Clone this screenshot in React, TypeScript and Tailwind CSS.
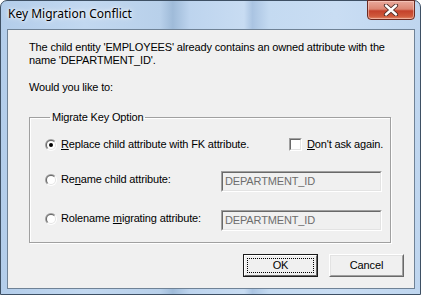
import React from 'react';

function Radio({ id, checked }: { id: string; checked?: boolean }) {
    return (
        <svg width="12" height="12" viewBox="0 0 12 12" className="shrink-0">
            <defs>
                <linearGradient id={`${id}-o`} x1="0" y1="0" x2="1" y2="1">
                    <stop offset="0.45" stopColor="#a0a0a0" />
                    <stop offset="0.55" stopColor="#ffffff" />
                </linearGradient>
                <linearGradient id={`${id}-i`} x1="0" y1="0" x2="1" y2="1">
                    <stop offset="0.45" stopColor="#696969" />
                    <stop offset="0.55" stopColor="#e3e3e3" />
                </linearGradient>
            </defs>
            <circle cx="6" cy="6" r="6" fill={`url(#${id}-o)`} />
            <circle cx="6" cy="6" r="5" fill={`url(#${id}-i)`} />
            <circle cx="6" cy="6" r="4" fill="#ffffff" />
            {checked && <circle cx="6" cy="6" r="2" fill="#000000" />}
        </svg>
    );
}

function TextBox({ value }: { value: string }) {
    return (
        <div className="w-[161px] h-[21px] border border-t-[#a0a0a0] border-l-[#a0a0a0] border-r-white border-b-white">
            <div className="h-full border border-t-[#696969] border-l-[#696969] border-r-[#e3e3e3] border-b-[#e3e3e3] bg-[#f0f0f0] pl-[2px] leading-[17px] text-[#6d6d6d]">
                {value}
            </div>
        </div>
    );
}

export default function App() {
    return (
        <div className="w-[421px] h-[295px] bg-white">
            <div className="w-full h-full flex flex-col rounded-t-[7px] border border-[#3e5064] bg-[linear-gradient(to_right,#b3cdea_0%,#c2d8f0_20%,#b8d0ea_38%,#9fbbd9_41%,#bdd4ee_45%,#c8dcf2_58%,#aac4e2_60%,#c4daf1_64%,#c9ddf3_80%,#bfd6ef_100%)] font-[family-name:'Liberation_Sans',Arial,sans-serif] text-[11px] leading-[13px] tracking-[-0.15px] text-black">
                {/* title bar */}
                <div className="h-[28px] flex items-start shrink-0">
                    <div className="ml-[7px] mt-[5px] font-[family-name:'Noto_Sans',sans-serif] text-[12px] leading-[16px] tracking-normal [text-shadow:0_0_6px_#ffffff,0_0_3px_#ffffff]">
                        Key Migration Conflict
                    </div>
                    <div className="ml-auto mr-[5px] -mt-px w-[48px] h-[20px] rounded-b-[4px] border border-[#6b2b22] bg-[linear-gradient(to_bottom,#e9a99c_0%,#dc8673_45%,#c4412b_55%,#cf5a3c_85%,#e38a6c_100%)] flex items-center justify-center shadow-[inset_0_0_0_1px_rgba(255,220,210,0.5)]">
                        <svg width="16" height="12" viewBox="0 0 16 12">
                            <path d="M3 1.5 L13 10.5 M13 1.5 L3 10.5" stroke="#4a2a26" strokeWidth="4.2" strokeLinecap="round" />
                            <path d="M3 1.5 L13 10.5 M13 1.5 L3 10.5" stroke="#ffffff" strokeWidth="2.4" strokeLinecap="round" />
                        </svg>
                    </div>
                </div>

                {/* client area */}
                <div className="ml-[6px] mr-[5px] mb-[5px] flex-1 border border-[#6f8296] bg-[#f0f0f0] flex flex-col pt-[11px] pl-[21px] pr-[10px] pb-[11px]">
                    <p>
                        The child entity 'EMPLOYEES' already contains an owned attribute with the
                        <br />
                        name 'DEPARTMENT_ID'.
                    </p>
                    <p className="mt-[14px]">Would you like to:</p>

                    <fieldset className="mt-[17px] w-[362px] border border-[#a0a0a0] shadow-[1px_1px_0_#ffffff,inset_1px_1px_0_#ffffff] pl-[15px] pt-[14px] pb-[11px]">
                        <legend className="ml-[5px] px-[2px]">Migrate Key Option</legend>

                        <div className="flex items-center h-[13px]">
                            <div className="w-[244px] flex items-center gap-[4px]">
                                <Radio id="r1" checked />
                                <span>
                                    <u className="underline-offset-[1px]">R</u>eplace child attribute with FK attribute.
                                </span>
                            </div>
                            <div className="flex items-center gap-[5px]">
                                <div className="w-[13px] h-[13px] border border-t-[#a0a0a0] border-l-[#a0a0a0] border-r-white border-b-white">
                                    <div className="h-full border border-t-[#696969] border-l-[#696969] border-r-[#e3e3e3] border-b-[#e3e3e3] bg-white" />
                                </div>
                                <span>
                                    <u className="underline-offset-[1px]">D</u>on't ask again.
                                </span>
                            </div>
                        </div>

                        <div className="flex items-start mt-[20px]">
                            <div className="w-[176px] flex items-center gap-[4px] pt-[2px]">
                                <Radio id="r2" />
                                <span>
                                    Re<u className="underline-offset-[1px]">n</u>ame child attribute:
                                </span>
                            </div>
                            <TextBox value="DEPARTMENT_ID" />
                        </div>

                        <div className="flex items-start mt-[18px]">
                            <div className="w-[176px] flex items-center gap-[4px] pt-[2px]">
                                <Radio id="r3" />
                                <span>
                                    Rolename <u className="underline-offset-[1px]">m</u>igrating attribute:
                                </span>
                            </div>
                            <TextBox value="DEPARTMENT_ID" />
                        </div>
                    </fieldset>

                    <div className="mt-auto flex justify-end gap-[11px]">
                        <button className="w-[75px] h-[23px] border border-[#1a1a1a] bg-[#f0f0f0] p-0">
                            <div className="h-full border border-t-white border-l-white border-r-[#696969] border-b-[#696969] p-[2px]">
                                <div className="h-full border border-dotted border-black flex items-center justify-center leading-[13px]">
                                    OK
                                </div>
                            </div>
                        </button>
                        <button className="w-[75px] h-[23px] border border-t-white border-l-white border-r-[#696969] border-b-[#696969] bg-[#f0f0f0] p-0">
                            <div className="h-full border border-t-[#e3e3e3] border-l-[#e3e3e3] border-r-[#a0a0a0] border-b-[#a0a0a0] flex items-center justify-center leading-[13px]">
                                Cancel
                            </div>
                        </button>
                    </div>
                </div>
            </div>
        </div>
    );
}
